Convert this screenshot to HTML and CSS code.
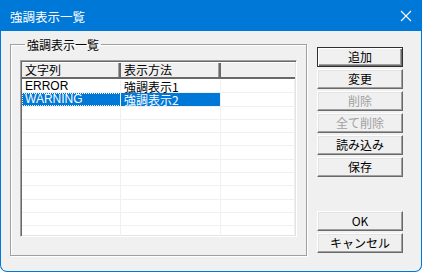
FILE: index.html
```html
<!DOCTYPE html>
<html lang="ja">
<head>
<meta charset="utf-8">
<link rel="stylesheet" href="styles.css">
</head>
<body>
<div class="window">
  <div class="titlebar">
    <span class="title">強調表示一覧</span>
    <svg class="close" width="12" height="12" viewBox="0 0 12 12"><path d="M1 1 L11 11 M11 1 L1 11" stroke="#fff" stroke-width="1.1" fill="none"/></svg>
  </div>
  <div class="content">
    <fieldset class="group">
      <legend>強調表示一覧</legend>
      <div class="listview">
        <div class="header">
          <div class="hcell c1">文字列</div>
          <div class="hcell c2">表示方法</div>
          <div class="hcell c3"></div>
        </div>
        <div class="rows">
          <div class="row"><div class="cell c1">ERROR</div><div class="cell c2">強調表示1</div><div class="cell c3"></div></div>
          <div class="row selected"><div class="cell c1">WARNING</div><div class="cell c2">強調表示2</div><div class="cell c3"></div></div>
          <div class="row"><div class="cell c1"></div><div class="cell c2"></div><div class="cell c3"></div></div>
          <div class="row"><div class="cell c1"></div><div class="cell c2"></div><div class="cell c3"></div></div>
          <div class="row"><div class="cell c1"></div><div class="cell c2"></div><div class="cell c3"></div></div>
          <div class="row"><div class="cell c1"></div><div class="cell c2"></div><div class="cell c3"></div></div>
          <div class="row"><div class="cell c1"></div><div class="cell c2"></div><div class="cell c3"></div></div>
          <div class="row"><div class="cell c1"></div><div class="cell c2"></div><div class="cell c3"></div></div>
          <div class="row"><div class="cell c1"></div><div class="cell c2"></div><div class="cell c3"></div></div>
          <div class="row"><div class="cell c1"></div><div class="cell c2"></div><div class="cell c3"></div></div>
          <div class="row"><div class="cell c1"></div><div class="cell c2"></div><div class="cell c3"></div></div>
          <div class="row"><div class="cell c1"></div><div class="cell c2"></div><div class="cell c3"></div></div>
          <div class="row"><div class="cell c1"></div><div class="cell c2"></div><div class="cell c3"></div></div>
        </div>
      </div>
    </fieldset>
    <div class="buttons">
      <button class="btn default">追加</button>
      <button class="btn">変更</button>
      <button class="btn" disabled>削除</button>
      <button class="btn" disabled>全て削除</button>
      <button class="btn">読み込み</button>
      <button class="btn">保存</button>
      <div class="spacer"></div>
      <button class="btn">OK</button>
      <button class="btn">キャンセル</button>
    </div>
  </div>
</div>
</body>
</html>
```
FILE: styles.css
```css
* { box-sizing: border-box; }
html, body { margin: 0; padding: 0; }
body {
  width: 422px;
  height: 272px;
  overflow: hidden;
  font-family: "Noto Sans CJK JP", "Liberation Sans", sans-serif;
  font-size: 12px;
  color: #000;
  background: #fff;
}
.window {
  width: 422px;
  height: 272px;
  background: #f0f0f0;
  border: 1px solid #0078d7;
  border-top: none;
  border-radius: 0 0 7px 7px;
  overflow: hidden;
  display: flex;
  flex-direction: column;
}
.titlebar {
  height: 31px;
  background: #0078d7;
  color: #fff;
  display: flex;
  align-items: center;
  justify-content: space-between;
  padding: 0 10px 0 10px;
  flex: none;
  margin: 0 -1px;
}
.title {
  font-size: 12.5px;
  line-height: 13px;
  padding-top: 1px;
}
.close { display: block; margin-top: 1px; }
.content {
  flex: 1;
  display: flex;
  padding: 7px 0 0 9px;
}
.group {
  margin: 0;
  width: 297px;
  height: 218px;
  border: 1px solid #a0a0a0;
  box-shadow: inset 1px 1px 0 #fff, 1px 1px 0 #fff;
  padding: 9px 8px 0 9px;
  min-width: 0;
}
.group legend {
  padding: 0 2px;
  margin-left: 5px;
  font-size: 12px;
  line-height: 13px;
}
.listview {
  width: 277px;
  height: 177px;
  background: #fff;
  border-top: 1px solid #a0a0a0;
  border-left: 1px solid #a0a0a0;
  border-right: 1px solid #fff;
  border-bottom: 1px solid #fff;
  box-shadow: inset 1px 1px 0 #696969, inset -1px -1px 0 #e3e3e3;
  padding: 1px;
  overflow: hidden;
}
.header {
  display: flex;
  height: 17px;
  background: #f0f0f0;
  border-bottom: 2px solid #696969;
  border-top: 1px solid #fff;
}
.hcell {
  line-height: 14px;
  padding-left: 3px;
  border-right: 2px solid #696969;
  box-shadow: inset -1px 0 0 #a0a0a0;
  white-space: nowrap;
}
.hcell.c3 { border-right: none; box-shadow: none; }
.c1 { width: 99px; flex: none; }
.c2 { width: 100px; flex: none; }
.c3 { flex: 1; }
.rows { padding-top: 1px; }
.row {
  display: flex;
  height: 13.3px;
  border-bottom: 1px solid #f0f0f0;
}
.cell {
  line-height: 13px;
  padding-left: 3px;
  border-right: 1px solid #f0f0f0;
  white-space: nowrap;
  font-family: "Liberation Sans", "Noto Sans CJK JP", sans-serif;
}
.row .cell.c2 { font-family: "Noto Sans CJK JP", sans-serif; }
.row.selected .c1, .row.selected .c2 {
  background: #0078d7;
  color: #fff;
}
.row.selected .c1 { outline: 1px dotted #fff; outline-offset: -1px; }
.buttons {
  display: flex;
  flex-direction: column;
  gap: 2px;
  margin-left: 10px;
  padding-top: 9px;
  padding-bottom: 18px;
}
.spacer { flex: 1; }
.btn {
  width: 86px;
  height: 20px;
  margin: 0;
  padding: 0;
  font-family: "Noto Sans CJK JP", "Liberation Sans", sans-serif;
  font-size: 12px;
  line-height: 1;
  color: #000;
  background: #f0f0f0;
  border: 1px solid;
  border-color: #fff #696969 #696969 #fff;
  box-shadow: inset -1px -1px 0 #a0a0a0, inset 1px 1px 0 #e3e3e3;
}
.btn.default {
  border: 1px solid #303030;
  box-shadow: inset 1px 1px 0 #fff, inset -1px -1px 0 #696969, inset -2px -2px 0 #a0a0a0;
}
.btn:disabled { color: #a0a0a0; }
```
